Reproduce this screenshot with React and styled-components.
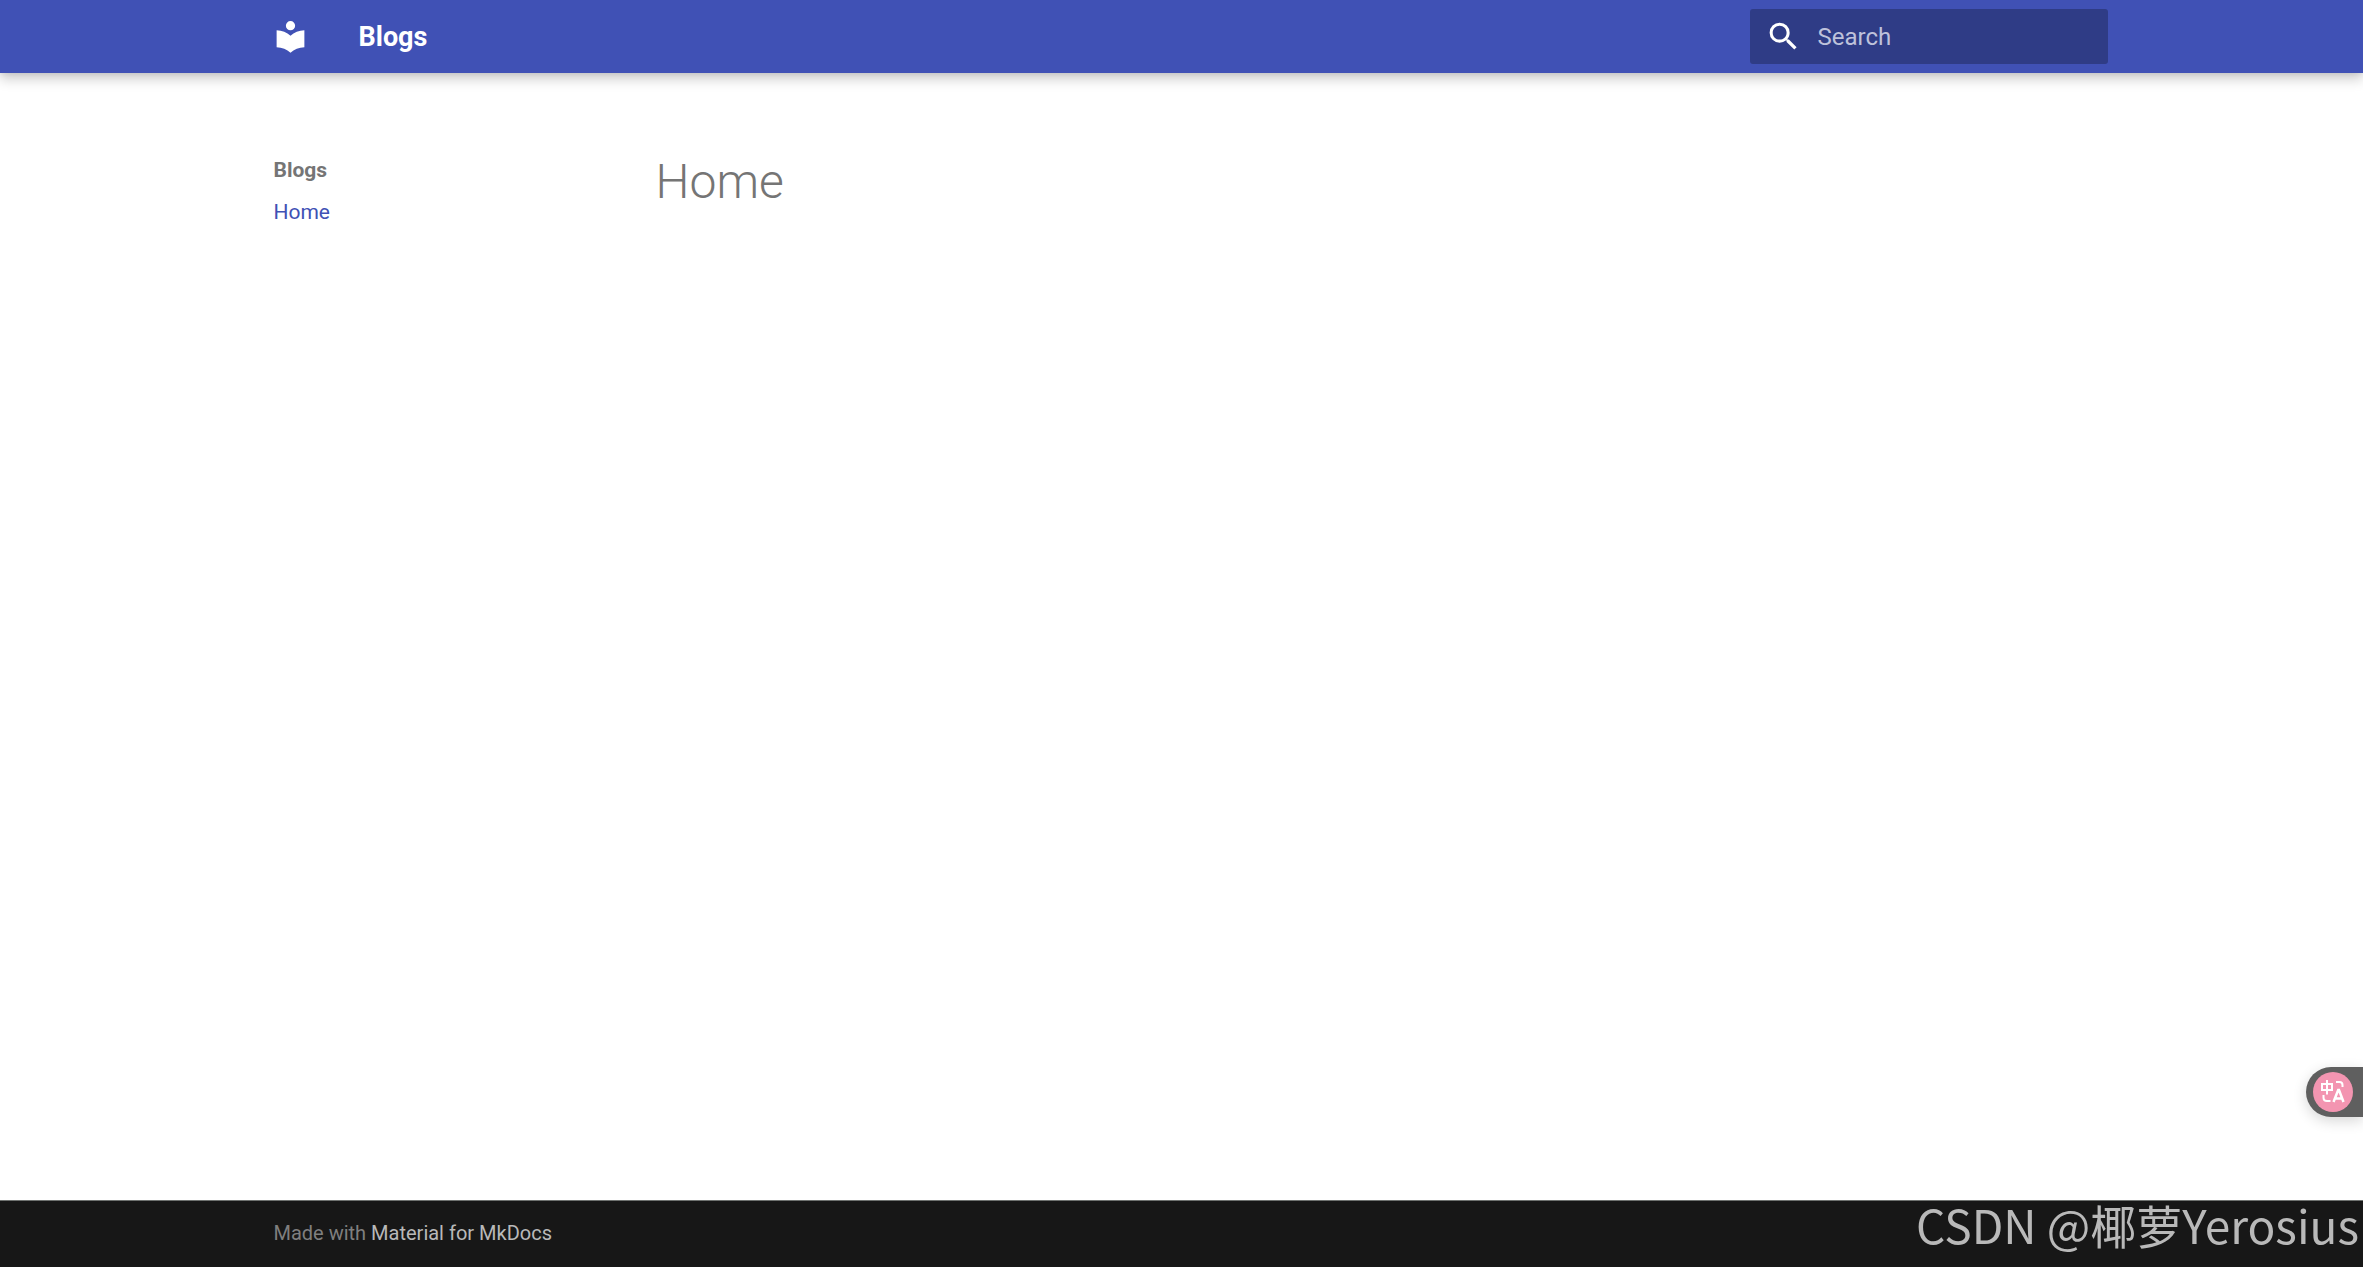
import React from "react";
import styled, { createGlobalStyle } from "styled-components";

const GlobalStyle = createGlobalStyle`
  * {
    box-sizing: border-box;
  }
  body {
    margin: 0;
    background: #fff;
    font-family: Roboto, "Liberation Sans", sans-serif;
  }
`;

const Page = styled.div`
  display: flex;
  flex-direction: column;
  min-height: 100vh;
`;

const Grid = styled.div`
  display: flex;
  width: 100%;
  max-width: 1852px;
  margin: 0 auto;
`;

const Header = styled.header`
  background: #4051b5;
  color: #fff;
  box-shadow: 0 0 6px rgba(0, 0, 0, 0.1), 0 6px 12px rgba(0, 0, 0, 0.2);
`;

const HeaderInner = styled(Grid)`
  align-items: center;
  height: 73px;
`;

const Logo = styled.a`
  display: flex;
  margin-left: 16px;
  color: inherit;

  svg {
    width: 37px;
    height: 37px;
    fill: currentColor;
  }
`;

const Title = styled.span`
  flex: 1;
  margin-left: 50px;
  font-size: 27px;
  font-weight: 700;
  line-height: 74px;
`;

const Search = styled.label`
  display: flex;
  align-items: center;
  width: 358px;
  height: 55px;
  padding-left: 15px;
  background: #2f3c86;
  border-radius: 3px;

  svg {
    width: 37px;
    height: 37px;
    fill: currentColor;
  }
`;

const SearchInput = styled.input`
  flex: 1;
  min-width: 0;
  margin-left: 16px;
  padding: 0;
  border: 0;
  outline: 0;
  background: transparent;
  color: #fff;
  font-family: inherit;
  font-size: 24px;

  &::placeholder {
    color: #bec2db;
    opacity: 1;
  }
`;

const Main = styled.main`
  flex: 1;
  padding-top: 83px;
`;

const Sidebar = styled.nav`
  width: 364px;
  padding: 0 18px;
  font-size: 21px;
  line-height: 28px;
`;

const SidebarTitle = styled.div`
  color: #757575;
  font-weight: 700;
`;

const NavList = styled.ul`
  margin: 14px 0 0;
  padding: 0;
  list-style: none;
`;

const NavLink = styled.a`
  color: #4051b5;
  text-decoration: none;
`;

const Article = styled.article`
  flex: 1;
  padding: 0 36px;
`;

const Heading = styled.h1`
  margin: 0;
  color: #757575;
  font-size: 48px;
  font-weight: 300;
  line-height: 52px;
`;

const Footer = styled.footer`
  border-top: 1px solid #6f7270;
  background: #171717;
`;

const Copyright = styled.div`
  padding: 17px 18px 18px;
  color: #7f7f7f;
  font-size: 20px;
  line-height: 31px;

  a {
    color: #b9b9b9;
    text-decoration: none;
  }
`;

const TranslateButton = styled.button`
  position: fixed;
  right: 0;
  bottom: 150px;
  width: 57px;
  height: 50px;
  padding: 0 0 0 7px;
  border: 0;
  border-radius: 25px 0 0 25px;
  background: #5f5f5f;
  box-shadow: 0 4px 14px rgba(0, 0, 0, 0.16);

  svg {
    display: block;
    width: 40px;
    height: 40px;
  }
`;

const Watermark = styled.div`
  position: fixed;
  right: 4px;
  bottom: 9px;
  color: #b9b9b9;
  font-family: "Noto Sans CJK SC", sans-serif;
  font-size: 46px;
  font-weight: 400;
  line-height: 67px;
  white-space: nowrap;
`;

const App = () => {
  return (
    <React.Fragment>
      <GlobalStyle />
      <Page>
        <Header>
          <HeaderInner>
            <Logo href="#" aria-label="Blogs">
              <svg viewBox="0 0 24 24">
                <path d="M12 8a3 3 0 0 0 3-3 3 3 0 0 0-3-3 3 3 0 0 0-3 3 3 3 0 0 0 3 3m0 3.54C9.64 9.35 6.5 8 3 8v11c3.5 0 6.64 1.35 9 3.54 2.36-2.19 5.5-3.54 9-3.54V8c-3.5 0-6.64 1.35-9 3.54Z" />
              </svg>
            </Logo>
            <Title>Blogs</Title>
            <Search>
              <svg viewBox="0 0 24 24" aria-hidden="true">
                <path d="M9.5 3A6.5 6.5 0 0 1 16 9.5c0 1.61-.59 3.09-1.56 4.23l.27.27h.79l5 5-1.5 1.5-5-5v-.79l-.27-.27A6.516 6.516 0 0 1 9.5 16 6.5 6.5 0 0 1 3 9.5 6.5 6.5 0 0 1 9.5 3m0 2C7 5 5 7 5 9.5S7 14 9.5 14 14 12 14 9.5 12 5 9.5 5Z" />
              </svg>
              <SearchInput type="text" aria-label="Search" placeholder="Search" />
            </Search>
          </HeaderInner>
        </Header>
        <Main>
          <Grid>
            <Sidebar>
              <SidebarTitle>Blogs</SidebarTitle>
              <NavList>
                <li>
                  <NavLink href="#">Home</NavLink>
                </li>
              </NavList>
            </Sidebar>
            <Article>
              <Heading>Home</Heading>
            </Article>
          </Grid>
        </Main>
        <Footer>
          <Grid>
            <Copyright>
              Made with <a href="#">Material for MkDocs</a>
            </Copyright>
          </Grid>
        </Footer>
      </Page>
      <TranslateButton aria-label="Translate">
        <svg viewBox="0 0 40 40" fill="none" stroke="#fff" strokeWidth="2">
          <circle cx="20" cy="20" r="20" fill="#f395b1" stroke="none" />
          <path d="M9 12h10v6H9zM14 8v14.500" />
          <path d="M23 10h3.500q3 0 3 3v2M10.500 23v2.500q0 3.500 3.500 3.500h3.500" />
          <path d="M20.500 30l4.700-12h.8l4.500 12M22 26.500h7" strokeWidth="2.500" />
        </svg>
      </TranslateButton>
      <Watermark>CSDN @椰萝Yerosius</Watermark>
    </React.Fragment>
  );
};

export default App;
